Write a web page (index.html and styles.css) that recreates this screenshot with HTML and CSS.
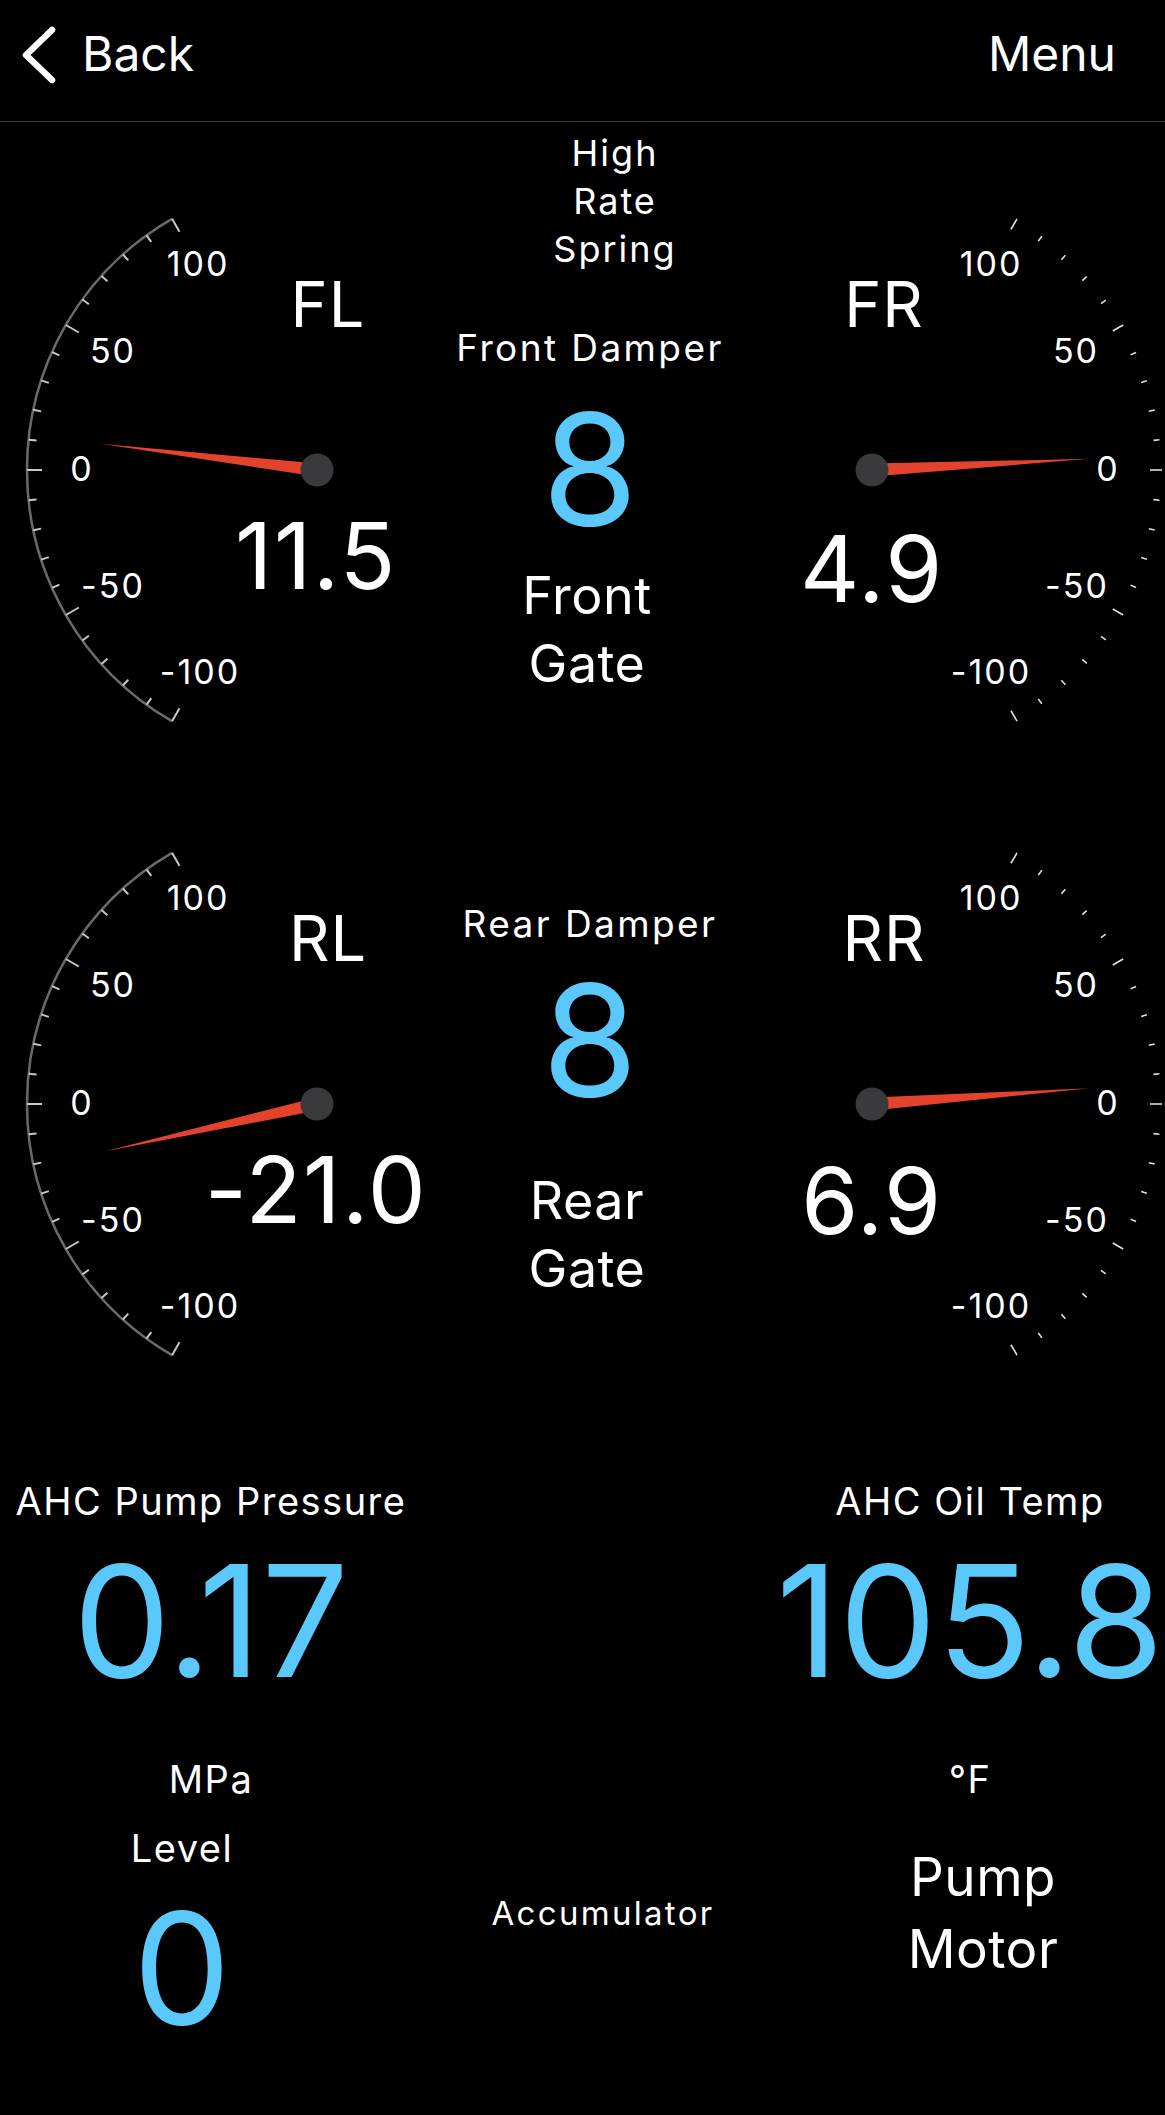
FILE: index.html
```html
<!DOCTYPE html>
<html lang="en">
<head>
  <meta charset="UTF-8">
  <meta name="viewport" content="width=device-width, initial-scale=1.0">
  <title>AHC Suspension</title>
  <link rel="stylesheet" href="styles.css">
</head>
<body>
  <!-- shared gauge parts -->
  <svg class="defs" width="0" height="0" aria-hidden="true">
    <defs>
      <g id="scale-left">
        <path d="M -145 -251.15 A 290 290 0 0 0 -145 251.15" fill="none" stroke="#6a6a6a" stroke-width="2.5"/>
        <line x1="-290" x2="-275" transform="rotate(-60)"/>
        <line x1="-290" x2="-282" transform="rotate(-54)"/>
        <line x1="-290" x2="-282" transform="rotate(-48)"/>
        <line x1="-290" x2="-282" transform="rotate(-42)"/>
        <line x1="-290" x2="-282" transform="rotate(-36)"/>
        <line x1="-290" x2="-275" transform="rotate(-30)"/>
        <line x1="-290" x2="-282" transform="rotate(-24)"/>
        <line x1="-290" x2="-282" transform="rotate(-18)"/>
        <line x1="-290" x2="-282" transform="rotate(-12)"/>
        <line x1="-290" x2="-282" transform="rotate(-6)"/>
        <line x1="-290" x2="-275" transform="rotate(0)"/>
        <line x1="-290" x2="-282" transform="rotate(6)"/>
        <line x1="-290" x2="-282" transform="rotate(12)"/>
        <line x1="-290" x2="-282" transform="rotate(18)"/>
        <line x1="-290" x2="-282" transform="rotate(24)"/>
        <line x1="-290" x2="-275" transform="rotate(30)"/>
        <line x1="-290" x2="-282" transform="rotate(36)"/>
        <line x1="-290" x2="-282" transform="rotate(42)"/>
        <line x1="-290" x2="-282" transform="rotate(48)"/>
        <line x1="-290" x2="-282" transform="rotate(54)"/>
        <line x1="-290" x2="-275" transform="rotate(60)"/>
      </g>
      <g id="scale-right">
        <line x1="278" x2="290" transform="rotate(-60)"/>
        <line x1="283" x2="289" transform="rotate(-54)"/>
        <line x1="283" x2="289" transform="rotate(-48)"/>
        <line x1="283" x2="289" transform="rotate(-42)"/>
        <line x1="283" x2="289" transform="rotate(-36)"/>
        <line x1="278" x2="290" transform="rotate(-30)"/>
        <line x1="283" x2="289" transform="rotate(-24)"/>
        <line x1="283" x2="289" transform="rotate(-18)"/>
        <line x1="283" x2="289" transform="rotate(-12)"/>
        <line x1="283" x2="289" transform="rotate(-6)"/>
        <line x1="278" x2="290" transform="rotate(0)"/>
        <line x1="283" x2="289" transform="rotate(6)"/>
        <line x1="283" x2="289" transform="rotate(12)"/>
        <line x1="283" x2="289" transform="rotate(18)"/>
        <line x1="283" x2="289" transform="rotate(24)"/>
        <line x1="278" x2="290" transform="rotate(30)"/>
        <line x1="283" x2="289" transform="rotate(36)"/>
        <line x1="283" x2="289" transform="rotate(42)"/>
        <line x1="283" x2="289" transform="rotate(48)"/>
        <line x1="283" x2="289" transform="rotate(54)"/>
        <line x1="278" x2="290" transform="rotate(60)"/>
      </g>
      <polygon id="needle" points="0,-6.5 218,0 0,6.5"/>
    </defs>
  </svg>

  <header class="topbar">
    <a class="back" href="#">
      <svg width="40" height="62" viewBox="0 0 40 62">
        <polyline points="34,6 8,31 34,56" fill="none" stroke="#fff" stroke-width="6.5" stroke-linecap="round" stroke-linejoin="round"/>
      </svg>
      <span>Back</span>
    </a>
    <a class="menu" href="#">Menu</a>
  </header>

  <section class="gauge-row">
    <svg class="gauge" width="430" height="634" viewBox="0 0 430 634">
      <use href="#scale-left" class="ticks" transform="translate(317 348)"/>
      <text class="scale-label" x="198" y="153.5">100</text>
      <text class="scale-label" x="113" y="240.5">50</text>
      <text class="scale-label" x="82" y="358.5">0</text>
      <text class="scale-label" x="113" y="475.5">-50</text>
      <text class="scale-label" x="200" y="561.5">-100</text>
      <text class="gauge-name" x="328" y="205">FL</text>
      <text class="gauge-value" x="316" y="467">11.5</text>
      <use href="#needle" class="needle" transform="translate(317 348) rotate(186.9)"/>
      <circle class="hub" cx="317" cy="348" r="16.5"/>
    </svg>
    <div class="damper damper-front">
      <div class="spring">High<br>Rate<br>Spring</div>
      <div class="damper-label">Front Damper</div>
      <div class="damper-value">8</div>
      <div class="gate">Front<br>Gate</div>
    </div>
    <svg class="gauge" width="415" height="634" viewBox="0 0 415 634">
      <use href="#scale-right" class="ticks ticks-thin" transform="translate(122 348)"/>
      <text class="scale-label" x="241" y="153.5">100</text>
      <text class="scale-label" x="326" y="240.5">50</text>
      <text class="scale-label" x="358" y="358.5">0</text>
      <text class="scale-label" x="327" y="475.5">-50</text>
      <text class="scale-label" x="241" y="561.5">-100</text>
      <text class="gauge-name" x="134" y="205">FR</text>
      <text class="gauge-value" x="122" y="480">4.9</text>
      <use href="#needle" class="needle" transform="translate(122 348) rotate(-2.94)"/>
      <circle class="hub" cx="122" cy="348" r="16.5"/>
    </svg>
  </section>

  <section class="gauge-row">
    <svg class="gauge" width="430" height="634" viewBox="0 0 430 634">
      <use href="#scale-left" class="ticks" transform="translate(317 348)"/>
      <text class="scale-label" x="198" y="153.5">100</text>
      <text class="scale-label" x="113" y="240.5">50</text>
      <text class="scale-label" x="82" y="358.5">0</text>
      <text class="scale-label" x="113" y="475.5">-50</text>
      <text class="scale-label" x="200" y="561.5">-100</text>
      <text class="gauge-name" x="328" y="205">RL</text>
      <text class="gauge-value" x="316" y="467">-21.0</text>
      <use href="#needle" class="needle" transform="translate(317 348) rotate(167.4)"/>
      <circle class="hub" cx="317" cy="348" r="16.5"/>
    </svg>
    <div class="damper damper-rear">
      <div class="damper-label">Rear Damper</div>
      <div class="damper-value">8</div>
      <div class="gate">Rear<br>Gate</div>
    </div>
    <svg class="gauge" width="415" height="634" viewBox="0 0 415 634">
      <use href="#scale-right" class="ticks ticks-thin" transform="translate(122 348)"/>
      <text class="scale-label" x="241" y="153.5">100</text>
      <text class="scale-label" x="326" y="240.5">50</text>
      <text class="scale-label" x="358" y="358.5">0</text>
      <text class="scale-label" x="327" y="475.5">-50</text>
      <text class="scale-label" x="241" y="561.5">-100</text>
      <text class="gauge-name" x="134" y="205">RR</text>
      <text class="gauge-value" x="122" y="478">6.9</text>
      <use href="#needle" class="needle" transform="translate(122 348) rotate(-4.14)"/>
      <circle class="hub" cx="122" cy="348" r="16.5"/>
    </svg>
  </section>

  <section class="readouts">
    <div class="readouts-top">
      <div class="readout">
        <div class="label">AHC Pump Pressure</div>
        <div class="big">0.17</div>
        <div class="unit">MPa</div>
      </div>
      <div></div>
      <div class="readout">
        <div class="label">AHC Oil Temp</div>
        <div class="big">105.8</div>
        <div class="unit">°F</div>
      </div>
    </div>
    <div class="readouts-bottom">
      <div class="readout">
        <div class="label">Level</div>
        <div class="big">0</div>
      </div>
      <div class="status">Accumulator</div>
      <div class="status status-motor">Pump<br>Motor</div>
    </div>
  </section>
</body>
</html>
```

FILE: styles.css
```css
/* iOS-style dark dashboard */
body {
  margin: 0;
  width: 1165px;
  background: #000;
  color: #fff;
  font-family: Inter, "Noto Sans", sans-serif;
}
.defs {
  display: block;
  width: 0;
  height: 0;
}
.topbar {
  display: flex;
  justify-content: space-between;
  align-items: flex-start;
  height: 122px;
  box-sizing: border-box;
  padding: 25px 49px 0 18px;
  border-bottom: 1px solid #3a3a3c;
  font-size: 48px;
  line-height: 58px;
}
.topbar a {
  color: #fff;
  text-decoration: none;
}
.back {
  display: flex;
  align-items: flex-start;
}
.back svg {
  display: block;
  margin-top: -1px;
}
.back span {
  margin-left: 24px;
}
/* gauges */
.gauge-row {
  display: flex;
  height: 634px;
}
.gauge {
  display: block;
  flex: none;
  overflow: visible;
}
.ticks {
  stroke: #c8c8c8;
  stroke-width: 2;
}
.ticks-thin {
  stroke: #e0e0e0;
  stroke-width: 1.6;
}
.scale-label {
  font-size: 34px;
  letter-spacing: 2px;
  fill: #fff;
  text-anchor: middle;
}
.gauge-name {
  font-size: 63px;
  letter-spacing: 1px;
  fill: #fff;
  text-anchor: middle;
}
.gauge-value {
  font-size: 92px;
  letter-spacing: 1.5px;
  fill: #fff;
  text-anchor: middle;
}
.needle {
  fill: #e3432c;
}
.hub {
  fill: #3a3a3c;
}
/* damper column */
.damper {
  flex: 1;
  text-align: center;
}
.spring {
  padding: 7px 0 0 50px;
  font-size: 36px;
  line-height: 48px;
  letter-spacing: 2px;
}
.damper-label {
  font-size: 37px;
  line-height: 48px;
  letter-spacing: 2.4px;
}
.damper-value {
  font-size: 155px;
  line-height: 155px;
  color: #5ac8fa;
}
.gate {
  padding-right: 6px;
  font-size: 52px;
  line-height: 68px;
  letter-spacing: 0.5px;
}
.damper-front .damper-label { margin-top: 51px; }
.damper-front .damper-value { margin-top: 19px; }
.damper-front .gate { margin-top: 16px; }
.damper-rear .damper-label { margin-top: 144px; }
.damper-rear .damper-value { margin-top: 14px; }
.damper-rear .gate { margin-top: 50px; }
/* bottom readouts */
.readouts {
  padding-top: 88px;
}
.readouts-top {
  display: grid;
  grid-template-columns: 422px 1fr 390px;
  text-align: center;
}
.readouts-bottom {
  display: grid;
  grid-template-columns: 364px 478px 282px;
  margin-top: 23px;
  text-align: center;
}
.label,
.unit {
  font-size: 38px;
  line-height: 46px;
  letter-spacing: 1.5px;
}
.big {
  margin-top: 19px;
  font-size: 155px;
  line-height: 155px;
  color: #5ac8fa;
}
.unit {
  margin-top: 58px;
}
.status {
  padding-top: 68px;
  font-size: 33px;
  line-height: 40px;
  letter-spacing: 2.3px;
}
.status-motor {
  padding-top: 16px;
  font-size: 53px;
  line-height: 72px;
  letter-spacing: 0.5px;
}
```
